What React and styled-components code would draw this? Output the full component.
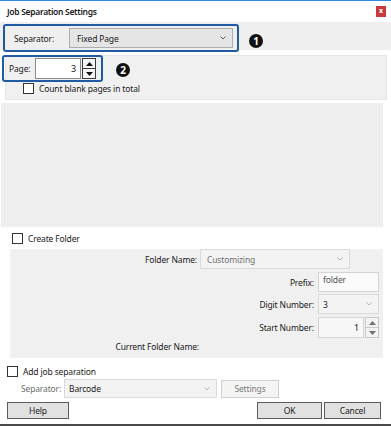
import styled, { createGlobalStyle } from 'styled-components';

const GlobalStyle = createGlobalStyle`
  * { box-sizing: border-box; }
  html, body { margin: 0; padding: 0; background: #ffffff; }
  body {
    font-family: "Noto Sans", "Open Sans", sans-serif;
    font-size: 8.5px;
    letter-spacing: -0.15px;
    color: #1a1a1a;
  }
`;

const BLUE = '#1f5aa3';

const Window = styled.div`
  width: 391px;
  height: 426px;
  background: #ffffff;
  border-top: 1px solid #2b8ad8;
  display: flex;
  flex-direction: column;
  overflow: hidden;
`;

const TitleBar = styled.div`
  height: 21px;
  display: flex;
  align-items: center;
  justify-content: space-between;
  padding: 0 5px 0 7px;
  font-weight: 600;
  font-size: 8.5px;
  letter-spacing: -0.3px;
`;

const CloseBtn = styled.div`
  width: 10px;
  height: 11px;
  margin-top: -1px;
  background: #c8393b;
  color: #fff;
  font-size: 7px;
  line-height: 10px;
  text-align: center;
  font-weight: 700;
  letter-spacing: 0;
`;

const Band = styled.div`
  height: 28px;
  background: #efefef;
  display: flex;
  align-items: flex-start;
  padding-left: 3px;
`;

const Highlight = styled.div`
  display: flex;
  align-items: center;
  border: 2px solid ${BLUE};
  border-radius: 3px;
  width: ${p => p.$w}px;
  height: ${p => p.$h}px;
  margin-top: ${p => p.$mt || 0}px;
  margin-left: ${p => p.$ml || 0}px;
  padding-left: ${p => p.$pl || 0}px;
  flex-shrink: 0;
`;

const Callout = styled.div`
  width: 14px;
  height: 14px;
  border-radius: 50%;
  background: #111;
  color: #fff;
  font-weight: 700;
  font-size: 10px;
  letter-spacing: 0;
  line-height: 14px;
  text-align: center;
  margin-left: ${p => p.$ml}px;
  margin-top: ${p => p.$mt}px;
  flex-shrink: 0;
`;

const Label = styled.span`
  width: ${p => (p.$w ? `${p.$w}px` : 'auto')};
  color: ${p => (p.$disabled ? '#6d6d6d' : '#1a1a1a')};
  white-space: nowrap;
  flex-shrink: 0;
`;

const Select = styled.div`
  position: relative;
  display: flex;
  align-items: center;
  width: ${p => p.$w}px;
  height: ${p => p.$h || 20}px;
  margin-left: ${p => p.$ml || 0}px;
  padding-left: ${p => p.$pl || 6}px;
  background: ${p => (p.$disabled ? '#f3f3f3' : '#e5e5e5')};
  border: 1px solid ${p => (p.$disabled ? '#dadada' : '#adadad')};
  color: ${p => (p.$muted ? '#707070' : '#1a1a1a')};
  flex-shrink: 0;
`;

const Chevron = styled.svg`
  position: absolute;
  right: 6px;
  top: 50%;
  margin-top: -2px;
`;

const ChevronIcon = ({ light }) => (
  <Chevron width="6" height="4" viewBox="0 0 6 4">
    <path d="M0.5 0.5 L3 3 L5.5 0.5" fill="none" stroke={light ? '#b5b5b5' : '#606060'} strokeWidth="1" />
  </Chevron>
);

const PagePanel = styled.div`
  margin: 5px 4px 0 5px;
  height: 45px;
  background: #f0f0f0;
  border: 1px solid #e6e6e6;
  display: flex;
  flex-direction: column;
`;

const PageRow = styled.div`
  display: flex;
  align-items: flex-start;
  margin-top: -1px;
`;

const NumInput = styled.div`
  display: flex;
  align-items: center;
  justify-content: flex-end;
  width: ${p => p.$w}px;
  height: 21px;
  margin-left: ${p => p.$ml || 0}px;
  padding-right: 4px;
  background: ${p => (p.$disabled ? '#f7f7f7' : '#ffffff')};
  border: 1px solid ${p => (p.$disabled ? '#d4d4d4' : '#8a8a8a')};
  color: #1a1a1a;
  font-size: 9px;
`;

const Spinner = styled.div`
  display: flex;
  flex-direction: column;
  width: 14px;
  height: 21px;
  margin-left: 1px;
`;

const SpinBtn = styled.div`
  flex: 1;
  display: flex;
  align-items: center;
  justify-content: center;
  background: ${p => (p.$disabled ? '#f3f3f3' : '#f6f6f6')};
  border: 1px solid ${p => (p.$disabled ? '#c8c8c8' : '#3c3c3c')};
  & + & { margin-top: -1px; }
`;

const Arrow = ({ down, disabled }) => (
  <svg width="7" height="4" viewBox="0 0 7 4">
    <path d={down ? 'M0 0 L7 0 L3.5 4 Z' : 'M0 4 L7 4 L3.5 0 Z'} fill={disabled ? '#707070' : '#111'} />
  </svg>
);

const SpinControl = ({ disabled }) => (
  <Spinner>
    <SpinBtn $disabled={disabled}><Arrow disabled={disabled} /></SpinBtn>
    <SpinBtn $disabled={disabled}><Arrow down disabled={disabled} /></SpinBtn>
  </Spinner>
);

const CheckRow = styled.label`
  display: flex;
  align-items: center;
  gap: 5px;
  height: ${p => p.$h}px;
  margin-top: ${p => p.$mt || 0}px;
  padding-left: ${p => p.$pl}px;
  color: #1a1a1a;
`;

const Box = styled.span`
  width: 11px;
  height: 11px;
  background: #fff;
  border: 1px solid #333;
  flex-shrink: 0;
`;

const EmptyPanel = styled.div`
  margin: 3px 8px 0 1px;
  height: 124px;
  background: #efefef;
`;

const FolderPanel = styled.div`
  margin: 0 8px 0 10px;
  height: 109px;
  background: #f0f0f0;
  display: flex;
  flex-direction: column;
`;

const FieldRow = styled.div`
  display: flex;
  align-items: center;
  height: ${p => p.$h || 20}px;
  margin-top: ${p => p.$mt || 0}px;
`;

const FieldLabel = styled.span`
  width: ${p => p.$w}px;
  text-align: right;
  padding-right: ${p => p.$gap || 4}px;
  color: #1a1a1a;
  white-space: nowrap;
  flex-shrink: 0;
`;

const TextBox = styled.div`
  width: ${p => p.$w}px;
  height: 20px;
  padding: 1px 0 0 4px;
  background: #fafafa;
  border: 1px solid #d4d4d4;
  color: #555;
`;

const JobRow = styled.div`
  display: flex;
  align-items: center;
  height: 19px;
  padding-left: 21px;
`;

const Button = styled.div`
  display: flex;
  align-items: center;
  justify-content: center;
  width: ${p => p.$w}px;
  height: ${p => p.$h || 17}px;
  margin-left: ${p => p.$ml || 0}px;
  background: ${p => (p.$disabled ? '#f4f4f4' : '#e1e1e1')};
  border: 1px solid ${p => (p.$disabled ? '#cfcfcf' : '#5c5c5c')};
  color: ${p => (p.$disabled ? '#7a7a7a' : '#1a1a1a')};
  flex-shrink: 0;
`;

const ButtonRow = styled.div`
  display: flex;
  align-items: center;
  height: 17px;
  margin-top: 4px;
  padding: 0 10px 0 7px;
`;

const Spacer = styled.div`
  flex: 1;
`;

const BottomEdge = styled.div`
  margin-top: auto;
  height: 2px;
  background: #4a4a4a;
`;

export default function App() {
  return (
    <>
      <GlobalStyle />
      <Window>
        <TitleBar>
          <span>Job Separation Settings</span>
          <CloseBtn>x</CloseBtn>
        </TitleBar>

        <Band>
          <Highlight $w={236} $h={28} $mt={2} $pl={9}>
            <Label $w={55}>Separator:</Label>
            <Select $w={164} $pl={7}>
              Fixed Page
              <ChevronIcon />
            </Select>
          </Highlight>
          <Callout $ml={10} $mt={12}>1</Callout>
        </Band>

        <PagePanel>
          <PageRow>
            <Highlight $w={101} $h={27} $ml={-4} $pl={5}>
              <Label $w={26}>Page:</Label>
              <NumInput $w={46}>3</NumInput>
              <SpinControl />
            </Highlight>
            <Callout $ml={13} $mt={8}>2</Callout>
          </PageRow>
          <CheckRow $h={13} $pl={17}>
            <Box />
            Count blank pages in total
          </CheckRow>
        </PagePanel>

        <EmptyPanel />

        <CheckRow $h={22} $pl={12}>
          <Box />
          Create Folder
        </CheckRow>

        <FolderPanel>
          <FieldRow>
            <FieldLabel $w={190} $gap={3}>Folder Name:</FieldLabel>
            <Select $w={150} $disabled $muted $pl={6}>
              Customizing
              <ChevronIcon light />
            </Select>
          </FieldRow>
          <FieldRow $mt={3}>
            <FieldLabel $w={308}>Prefix:</FieldLabel>
            <TextBox $w={61}>folder</TextBox>
          </FieldRow>
          <FieldRow $mt={2}>
            <FieldLabel $w={308}>Digit Number:</FieldLabel>
            <Select $w={61} $disabled $pl={4}>
              3
              <ChevronIcon light />
            </Select>
          </FieldRow>
          <FieldRow $mt={3} $h={21}>
            <FieldLabel $w={308}>Start Number:</FieldLabel>
            <NumInput $w={46} $disabled>1</NumInput>
            <SpinControl disabled />
          </FieldRow>
          <FieldRow $h={16}>
            <FieldLabel $w={193}>Current Folder Name:</FieldLabel>
          </FieldRow>
        </FolderPanel>

        <CheckRow $h={16} $pl={7} $mt={5}>
          <Box />
          Add job separation
        </CheckRow>

        <JobRow>
          <Label $disabled $w={43}>Separator:</Label>
          <Select $w={153} $h={19} $disabled $pl={4}>
            Barcode
            <ChevronIcon light />
          </Select>
          <Button $w={58} $h={18} $ml={4} $disabled>Settings</Button>
        </JobRow>

        <ButtonRow>
          <Button $w={62}>Help</Button>
          <Spacer />
          <Button $w={65}>OK</Button>
          <Button $w={57} $ml={2}>Cancel</Button>
        </ButtonRow>

        <BottomEdge />
      </Window>
    </>
  );
}
